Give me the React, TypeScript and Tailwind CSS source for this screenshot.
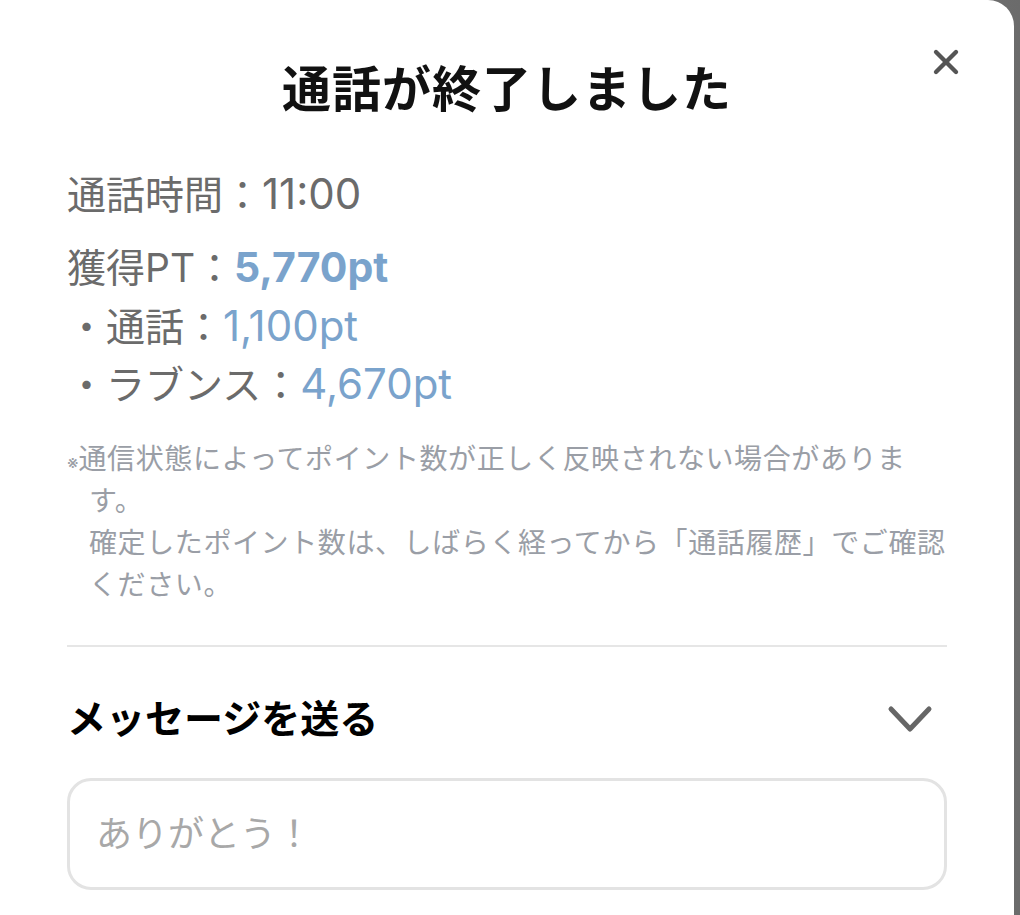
import { X } from 'lucide-react';

const font = { fontFamily: '"Inter", "Noto Sans CJK JP", sans-serif' };

export default function App() {
  return (
    <div className="w-[1020px] h-[915px] bg-gradient-to-l from-[#6b6b6b] to-[#bdbdbd] flex overflow-hidden" style={font}>
      <div className="w-[1014px] h-full bg-white rounded-tr-[26px] px-[67px] relative">
        {/* Close */}
        <button className="absolute top-[42px] right-[48px] text-[#555]">
          <X className="w-[40px] h-[40px]" strokeWidth={2.6} />
        </button>

        {/* Title */}
        <h1 className="pt-[60px] text-center text-[49px] font-bold text-[#111] leading-[60px] tracking-[1px]">
          通話が終了しました
        </h1>

        {/* Summary */}
        <div className="mt-[51px] text-[39px] text-[#6b6b6b] leading-[46px]">
          <p>
            通話時間：<span className="text-[42px]">11:00</span>
          </p>
          <p className="mt-[26px]">
            獲得PT：<span className="text-[41px] font-bold text-[#7aa3cc]">5,770pt</span>
          </p>
          <p className="mt-[12px]">
            ・通話：<span className="text-[42px] text-[#7aa3cc]">1,100pt</span>
          </p>
          <p className="mt-[11px]">
            ・ラブンス：<span className="text-[42px] text-[#7aa3cc]">4,670pt</span>
          </p>
        </div>

        {/* Notice */}
        <div className="mt-[30px] text-[28px] leading-[42px] tracking-[0.6px] text-[#9a9ea6] pl-[22px]">
          <p className="-indent-[22px]">
            <span className="text-[18px] leading-[0] tracking-normal">※</span>通信状態によってポイント数が正しく反映されない場合があります。
          </p>
          <p>確定したポイント数は、しばらく経ってから「通話履歴」でご確認ください。</p>
        </div>

        <div className="mt-[39px] h-[2px] bg-[#e6e6e6]" />

        {/* Message */}
        <div className="mt-[49px] flex items-center justify-between">
          <h2 className="text-[39px] font-bold text-black leading-[46px]">メッセージを送る</h2>
          <svg width="48" height="32" viewBox="0 0 48 32" className="mr-[13px]" fill="none">
            <path d="M5 6 L24 26 L43 6" stroke="#666" strokeWidth="5" strokeLinecap="round" strokeLinejoin="round" />
          </svg>
        </div>

        <div className="mt-[36px] h-[112px] border-[3px] border-[#e3e3e3] rounded-[24px] flex items-center px-[26px]">
          <span className="text-[36px] text-[#a8a8a8]">ありがとう！</span>
        </div>
      </div>
    </div>
  );
}
